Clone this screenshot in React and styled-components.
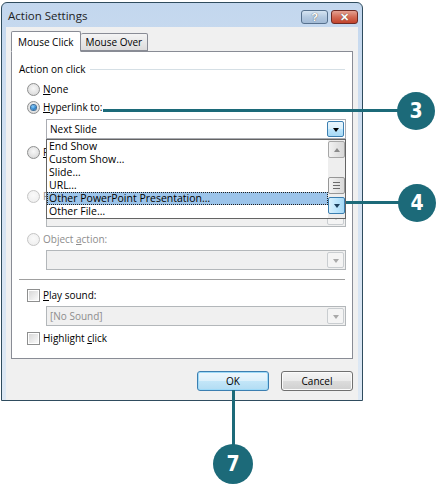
import React from 'react';
import styled, { createGlobalStyle } from 'styled-components';

const GlobalStyle = createGlobalStyle`
  html, body {
    margin: 0;
    padding: 0;
    background: #fff;
  }
  body {
    font-family: "Open Sans", "Liberation Sans", sans-serif;
    font-size: 10px;
    color: #000;
  }
`;

const TEAL = '#1c6a79';

const Stage = styled.div`
  position: relative;
  width: 438px;
  height: 485px;
  padding: 2px 0 0 1px;
  box-sizing: border-box;
  overflow: hidden;
`;

const Window = styled.div`
  width: 362px;
  box-sizing: border-box;
  border: 1px solid #2f4c5e;
  border-radius: 6px 6px 0 0;
  background: linear-gradient(180deg, #c3d7ee 0%, #d4e2f2 40%, #dde8f4 100%);
  display: flex;
  flex-direction: column;
`;

const TitleBar = styled.div`
  height: 24px;
  display: flex;
  align-items: center;
  justify-content: space-between;
  padding: 0 4px 0 6px;
  box-sizing: border-box;
`;

const Title = styled.span`
  font-size: 11.5px;
  color: #1e1e1e;
`;

const CaptionButtons = styled.div`
  display: flex;
  gap: 3px;
  margin-top: 4px;
`;

const CaptionButton = styled.div`
  width: 27px;
  height: 14px;
  box-sizing: border-box;
  border: 1px solid ${p => (p.$close ? '#6d2a25' : '#56708d')};
  border-radius: 3px;
  background: ${p => (p.$close
    ? 'linear-gradient(180deg, #e4a192 0%, #d36a55 50%, #c2432c 100%)'
    : 'linear-gradient(180deg, #d6e4f2 0%, #b4c9e0 50%, #a3bbd6 100%)')};
  display: flex;
  align-items: center;
  justify-content: center;
  color: #fff;
  font-family: "Liberation Sans", sans-serif;
  font-weight: bold;
  font-size: 11px;
  line-height: 1;
  text-shadow: 0 0 1px #333;
`;

const Client = styled.div`
  margin: 0 4px;
  background: #f0f0f0;
  padding: 4px 5px 9px 5px;
  display: flex;
  flex-direction: column;
`;

const TabRow = styled.div`
  display: flex;
  align-items: flex-end;
  height: 21px;
  margin-bottom: -1px;
  position: relative;
  z-index: 1;
`;

const Tab = styled.div`
  box-sizing: border-box;
  height: ${p => (p.$active ? '21px' : '18px')};
  border: 1px solid #898c95;
  border-bottom: ${p => (p.$active ? '1px solid #fff' : '1px solid #898c95')};
  border-left: ${p => (p.$active ? '1px solid #898c95' : 'none')};
  border-radius: 2px 2px 0 0;
  background: ${p => (p.$active ? '#fff' : 'linear-gradient(180deg, #f4f4f4 0%, #e8e8e8 50%, #dcdcdc 100%)')};
  padding: ${p => (p.$active ? '3px 6px 0 6px' : '1px 5px 0 5px')};
  margin-bottom: ${p => (p.$active ? '0' : '1px')};
  white-space: nowrap;
`;

const Panel = styled.div`
  height: 308px;
  box-sizing: border-box;
  border: 1px solid #898c95;
  background: #fff;
  padding: 8px 7px 0 7px;
  display: flex;
  flex-direction: column;
`;

const GroupHeader = styled.div`
  height: 18px;
  display: flex;
  align-items: center;
  gap: 4px;
  margin-bottom: 2px;
`;

const GroupLine = styled.div`
  flex: 1;
  height: 1px;
  background: #d5dfe5;
`;

const Options = styled.div`
  padding-left: 8px;
  display: flex;
  flex-direction: column;
`;

const OptionRow = styled.div`
  height: 18px;
  display: flex;
  align-items: center;
  gap: 3px;
  color: ${p => (p.$disabled ? '#8d8d8d' : '#000')};
  margin-top: ${p => p.$gap || 0}px;
`;

const Radio = styled.span`
  width: 13px;
  height: 13px;
  box-sizing: border-box;
  border-radius: 50%;
  border: 1px solid ${p => (p.$disabled ? '#c5c5c5' : '#8e8f8f')};
  background: ${p => (p.$disabled
    ? 'radial-gradient(circle at 50% 40%, #fafafa 0%, #ececec 100%)'
    : 'radial-gradient(circle at 50% 40%, #f8f8f8 0%, #e2e2e2 60%, #cfcfcf 100%)')};
  display: flex;
  align-items: center;
  justify-content: center;
  flex-shrink: 0;
  &::after {
    content: '';
    display: ${p => (p.$checked ? 'block' : 'none')};
    width: 5px;
    height: 5px;
    border-radius: 50%;
    background: radial-gradient(circle at 40% 35%, #8fd2ff 0%, #2f86cf 55%, #164f8c 100%);
    box-shadow: 0 0 0 1px #3d6e9a;
  }
`;

const Checkbox = styled.span`
  width: 13px;
  height: 13px;
  box-sizing: border-box;
  border: 1px solid #8e8f8f;
  background: #fff;
  padding: 1px;
  flex-shrink: 0;
  &::after {
    content: '';
    display: block;
    width: 100%;
    height: 100%;
    background: linear-gradient(135deg, #d8d8d8 0%, #ececec 60%, #fafafa 100%);
  }
`;

const FieldWrap = styled.div`
  position: relative;
  margin: ${p => (p.$top ?? 2)}px 0 0 27px;
  width: 300px;
`;

const Field = styled.div`
  height: 20px;
  box-sizing: border-box;
  border: 1px solid ${p => (p.$disabled ? '#b3b7ba' : '#abadb3')};
  background: ${p => (p.$disabled ? '#f0f0f0' : '#fff')};
  color: ${p => (p.$disabled ? '#8d8d8d' : '#000')};
  display: flex;
  align-items: center;
  padding: 0 1px 0 3px;
`;

const FieldText = styled.span`
  flex: 1;
`;

const ArrowButton = styled.span`
  width: 17px;
  height: 16px;
  box-sizing: border-box;
  border: 1px solid ${p => (p.$hot ? '#3c7fb1' : '#c9cdd0')};
  border-radius: 2px;
  background: ${p => (p.$hot
    ? 'linear-gradient(180deg, #eaf6fd 0%, #d9f0fc 50%, #bee6fd 51%, #a7d9f5 100%)'
    : '#f4f4f4')};
  display: flex;
  align-items: center;
  justify-content: center;
  &::after {
    content: '';
    border-left: 3.5px solid transparent;
    border-right: 3.5px solid transparent;
    border-top: 4px solid ${p => (p.$hot ? '#000' : '#a9a9a9')};
    margin-top: 1px;
  }
`;

const ListBox = styled.div`
  position: absolute;
  top: 100%;
  left: 0;
  width: 300px;
  height: 80px;
  box-sizing: border-box;
  border: 1px solid #646464;
  background: #fff;
  z-index: 2;
  display: flex;
  font-size: 10.5px;
`;

const Items = styled.div`
  flex: 1;
  display: flex;
  flex-direction: column;
`;

const Item = styled.div`
  height: 13px;
  box-sizing: border-box;
  line-height: 11px;
  padding-left: 1px;
  border: 1px ${p => (p.$selected ? 'dotted #222' : 'solid transparent')};
  background: ${p => (p.$selected ? '#9cc4ea' : 'transparent')};
  white-space: nowrap;
`;

const ScrollBar = styled.div`
  width: 17px;
  background: #eeeeee;
  display: flex;
  flex-direction: column;
  padding-top: 1px;
  box-sizing: border-box;
`;

const ScrollButton = styled.div`
  height: 17px;
  box-sizing: border-box;
  border: 1px solid ${p => (p.$hot ? '#3c7fb1' : '#a7a7a7')};
  border-radius: 2px;
  background: ${p => (p.$hot
    ? 'linear-gradient(90deg, #d9f0fc 0%, #bee6fd 50%, #a7d9f5 100%)'
    : 'linear-gradient(90deg, #f2f2f2 0%, #e4e4e4 50%, #d8d8d8 100%)')};
  display: flex;
  align-items: center;
  justify-content: center;
  margin-top: ${p => p.$gap || 0}px;
  &::after {
    content: '';
    border-left: 3.5px solid transparent;
    border-right: 3.5px solid transparent;
    ${p => (p.$down
    ? `border-top: 4px solid ${p.$hot ? '#1d3f5c' : '#5a5a5a'};`
    : 'border-bottom: 4px solid #8a8a8a;')}
  }
`;

const Thumb = styled.div`
  height: 17px;
  margin-top: 19px;
  box-sizing: border-box;
  border: 1px solid #979797;
  border-radius: 2px;
  background: linear-gradient(90deg, #f3f3f3 0%, #e6e6e6 50%, #d9d9d9 100%);
  display: flex;
  flex-direction: column;
  align-items: center;
  justify-content: center;
  gap: 2px;
`;

const Grip = styled.span`
  width: 7px;
  height: 1px;
  background: #6b6b6b;
`;

const Separator = styled.div`
  height: 1px;
  background: #a0a0a0;
  margin: 9px 0 6px 0;
`;

const ButtonRow = styled.div`
  display: flex;
  justify-content: flex-end;
  gap: 12px;
  margin-top: 12px;
`;

const Button = styled.div`
  width: 72px;
  height: 20px;
  box-sizing: border-box;
  border: 1px solid ${p => (p.$default ? '#3c7fb1' : '#707070')};
  border-radius: 3px;
  background: ${p => (p.$default
    ? 'linear-gradient(180deg, #eef7fd 0%, #dcf0fb 50%, #c3e6f8 51%, #b2dcf3 100%)'
    : 'linear-gradient(180deg, #f4f4f4 0%, #eaeaea 50%, #dcdcdc 51%, #cfcfcf 100%)')};
  box-shadow: inset 0 0 0 1px ${p => (p.$default ? '#9edaf8' : '#fbfbfb')};
  display: flex;
  align-items: center;
  justify-content: center;
`;

const CalloutLine = styled.div`
  position: absolute;
  background: ${TEAL};
`;

const CalloutBadge = styled.div`
  position: absolute;
  width: ${p => p.$size}px;
  height: ${p => p.$size}px;
  border-radius: 50%;
  background: ${TEAL};
  color: #fff;
  display: flex;
  align-items: center;
  justify-content: center;
  font-family: "Liberation Sans Narrow", "DejaVu Sans Condensed", "Liberation Sans", sans-serif;
  font-weight: bold;
  font-size: 21px;
`;

const callouts = [
  { n: '3', x: 416, y: 111, size: 38, line: { left: 103, top: 109, width: 296, height: 3 } },
  { n: '4', x: 417, y: 203, size: 38, line: { left: 320, top: 201, width: 80, height: 3 } },
  { n: '7', x: 233, y: 464, size: 40, line: { left: 232, top: 390, width: 3, height: 56 } },
];

const listItems = [
  'End Show',
  'Custom Show\u2026',
  'Slide\u2026',
  'URL\u2026',
  'Other PowerPoint Presentation\u2026',
  'Other File\u2026',
];

const App = () => (
  <Stage>
    <GlobalStyle />
    <Window>
      <TitleBar>
        <Title>Action Settings</Title>
        <CaptionButtons>
          <CaptionButton>?</CaptionButton>
          <CaptionButton $close>✕</CaptionButton>
        </CaptionButtons>
      </TitleBar>
      <Client>
        <TabRow>
          <Tab $active>Mouse Click</Tab>
          <Tab>Mouse Over</Tab>
        </TabRow>
        <Panel>
          <GroupHeader>
            <span>Action on click</span>
            <GroupLine />
          </GroupHeader>
          <Options>
            <OptionRow>
              <Radio />
              <span><u>N</u>one</span>
            </OptionRow>
            <OptionRow>
              <Radio $checked />
              <span><u>H</u>yperlink to:</span>
            </OptionRow>
          </Options>
          <FieldWrap $top={3}>
            <Field>
              <FieldText>Next Slide</FieldText>
              <ArrowButton $hot />
            </Field>
            <ListBox>
              <Items>
                {listItems.map((item, i) => (
                  <Item key={item} $selected={i === 4}>{item}</Item>
                ))}
              </Items>
              <ScrollBar>
                <ScrollButton />
                <Thumb><Grip /><Grip /><Grip /></Thumb>
                <ScrollButton $down $hot $gap={3} />
              </ScrollBar>
            </ListBox>
          </FieldWrap>
          <Options>
            <OptionRow $gap={4}>
              <Radio />
              <span><u>R</u></span>
            </OptionRow>
          </Options>
          <FieldWrap>
            <Field $disabled><FieldText /></Field>
          </FieldWrap>
          <Options>
            <OptionRow $gap={4} $disabled>
              <Radio $disabled />
              <span>R</span>
            </OptionRow>
          </Options>
          <FieldWrap>
            <Field $disabled>
              <FieldText />
              <ArrowButton />
            </Field>
          </FieldWrap>
          <Options>
            <OptionRow $gap={3} $disabled>
              <Radio $disabled />
              <span>Object <u>a</u>ction:</span>
            </OptionRow>
          </Options>
          <FieldWrap>
            <Field $disabled>
              <FieldText />
              <ArrowButton />
            </Field>
          </FieldWrap>
          <Separator />
          <Options>
            <OptionRow>
              <Checkbox />
              <span><u>P</u>lay sound:</span>
            </OptionRow>
          </Options>
          <FieldWrap>
            <Field $disabled>
              <FieldText>[No Sound]</FieldText>
              <ArrowButton />
            </Field>
          </FieldWrap>
          <Options>
            <OptionRow $gap={3}>
              <Checkbox />
              <span>Highlight <u>c</u>lick</span>
            </OptionRow>
          </Options>
        </Panel>
        <ButtonRow>
          <Button $default>OK</Button>
          <Button>Cancel</Button>
        </ButtonRow>
      </Client>
    </Window>
    {callouts.map(c => (
      <React.Fragment key={c.n}>
        <CalloutLine style={c.line} />
        <CalloutBadge $size={c.size} style={{ left: c.x - c.size / 2, top: c.y - c.size / 2 }}>{c.n}</CalloutBadge>
      </React.Fragment>
    ))}
  </Stage>
);

export default App;
